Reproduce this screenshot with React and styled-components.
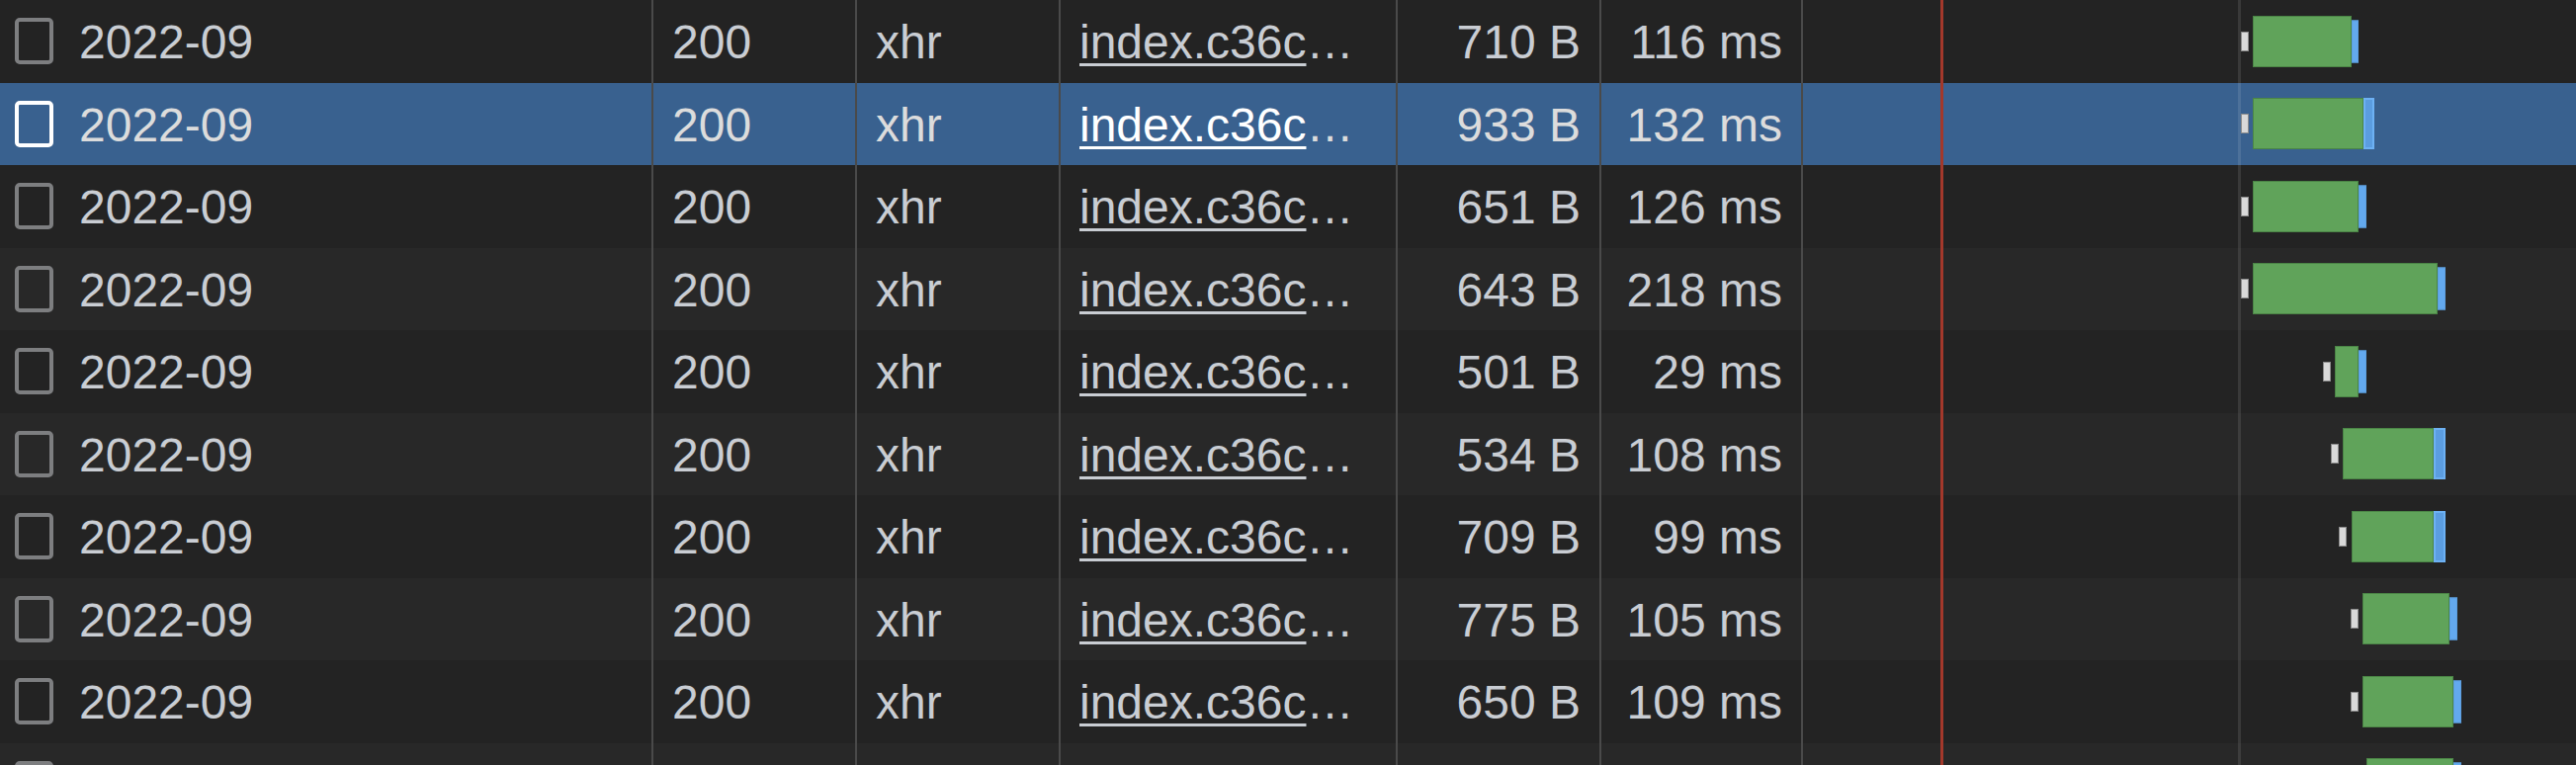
import React from 'react';
import styled, { createGlobalStyle } from 'styled-components';

const GlobalStyle = createGlobalStyle`
  html, body {
    margin: 0;
    padding: 0;
    background: #232323;
    overflow: hidden;
  }
  body {
    font-family: "Liberation Sans", Arial, sans-serif;
  }
`;

const WATERFALL_LEFT = 1824;

const rows = [
  { size: '710 B', time: '116 ms', wait: 2267, start: 2279, end: 2379, dl: 2386 },
  { size: '933 B', time: '132 ms', wait: 2267, start: 2279, end: 2391, dl: 2402, full: true, selected: true },
  { size: '651 B', time: '126 ms', wait: 2267, start: 2279, end: 2386, dl: 2394 },
  { size: '643 B', time: '218 ms', wait: 2267, start: 2279, end: 2466, dl: 2474 },
  { size: '501 B', time: '29 ms', wait: 2350, start: 2362, end: 2386, dl: 2394 },
  { size: '534 B', time: '108 ms', wait: 2358, start: 2370, end: 2462, dl: 2474, full: true },
  { size: '709 B', time: '99 ms', wait: 2366, start: 2379, end: 2462, dl: 2474, full: true },
  { size: '775 B', time: '105 ms', wait: 2378, start: 2390, end: 2478, dl: 2486 },
  { size: '650 B', time: '109 ms', wait: 2378, start: 2390, end: 2482, dl: 2490 },
  // only the top edge of this row is on screen, its texts lie below the fold
  { wait: 2382, start: 2394, end: 2482, dl: 2490, cut: true },
];

const Table = styled.div`
  position: relative;
  width: 2606px;
  height: 774px;
  overflow: hidden;
`;

const Row = styled.div`
  display: grid;
  grid-template-columns: 659px 206px 206px 341px 206px 204px 1fr;
  height: 83.5px;
  background: ${(p) => (p.$selected ? '#39618f' : p.$odd ? '#282828' : '#232323')};
  color: ${(p) => (p.$selected ? '#dcdcdc' : '#c9cdd3')};
  font-size: 48px;
`;

const Cell = styled.div`
  display: flex;
  align-items: center;
  justify-content: ${(p) => (p.$right ? 'flex-end' : 'flex-start')};
  padding: 2px 19px 0;
  border-left: 2px solid #4a4a4a;
  white-space: nowrap;
  overflow: hidden;
  min-width: 0;
`;

const NameCell = styled(Cell)`
  border-left: none;
  padding: 0 19px 0 15px;
  gap: 26px;
`;

const NameText = styled.span`
  padding-top: 2px;
`;

const Checkbox = styled.span`
  box-sizing: border-box;
  width: 39px;
  height: 47px;
  border: 4px solid ${(p) => (p.$selected ? '#ffffff' : '#7d7e80')};
  border-radius: 5px;
  flex-shrink: 0;
`;

const Link = styled.span`
  text-decoration: underline;
  text-decoration-thickness: 3px;
  text-underline-offset: 5px;
  color: ${(p) => (p.$selected ? '#ffffff' : 'inherit')};
`;

const WaterfallCell = styled.div`
  position: relative;
  border-left: 2px solid #4a4a4a;
`;

const Segment = styled.span`
  position: absolute;
  top: 50%;
  transform: translateY(-50%);
  box-sizing: border-box;
`;

const Queue = styled(Segment)`
  width: 8px;
  height: 20px;
  background: #d9d9d9;
  border: 1px solid #8c8c8c;
`;

const Waiting = styled(Segment)`
  height: 52px;
  background: #60a35a;
  border: 1px solid #4b8546;
`;

const Download = styled(Segment)`
  height: ${(p) => (p.$full ? '52px' : '43px')};
  background: ${(p) => (p.$full ? '#5b9de0' : '#63a9ee')};
  border: ${(p) => (p.$full ? '2px solid #6db1f3' : '1px solid #5d9fe0')};
`;

const Marker = styled.div`
  position: absolute;
  top: 0;
  bottom: 0;
  width: 3px;
  background: ${(p) => p.$color};
  pointer-events: none;
`;

const Waterfall = ({ r }) => (
  <WaterfallCell>
    <Queue style={{ left: r.wait - WATERFALL_LEFT }} />
    <Waiting style={{ left: r.start - WATERFALL_LEFT, width: r.end - r.start }} />
    <Download $full={r.full} style={{ left: r.end - WATERFALL_LEFT, width: r.dl - r.end }} />
  </WaterfallCell>
);

export default function App() {
  return (
    <>
      <GlobalStyle />
      <Table>
        {rows.map((r, i) => (
          <Row key={i} $odd={i % 2 === 1} $selected={r.selected}>
            <NameCell>
              <Checkbox $selected={r.selected} />
              {!r.cut && <NameText>2022-09</NameText>}
            </NameCell>
            <Cell>{!r.cut && '200'}</Cell>
            <Cell>{!r.cut && 'xhr'}</Cell>
            <Cell>
              {!r.cut && (
                <>
                  <Link $selected={r.selected}>index.c36c</Link>
                  <span>…</span>
                </>
              )}
            </Cell>
            <Cell $right>{r.size}</Cell>
            <Cell $right>{r.time}</Cell>
            <Waterfall r={r} />
          </Row>
        ))}
        <Marker $color="#a3382b" style={{ left: 1963 }} />
        <Marker $color="rgba(255,255,255,0.1)" style={{ left: 2264 }} />
      </Table>
    </>
  );
}
